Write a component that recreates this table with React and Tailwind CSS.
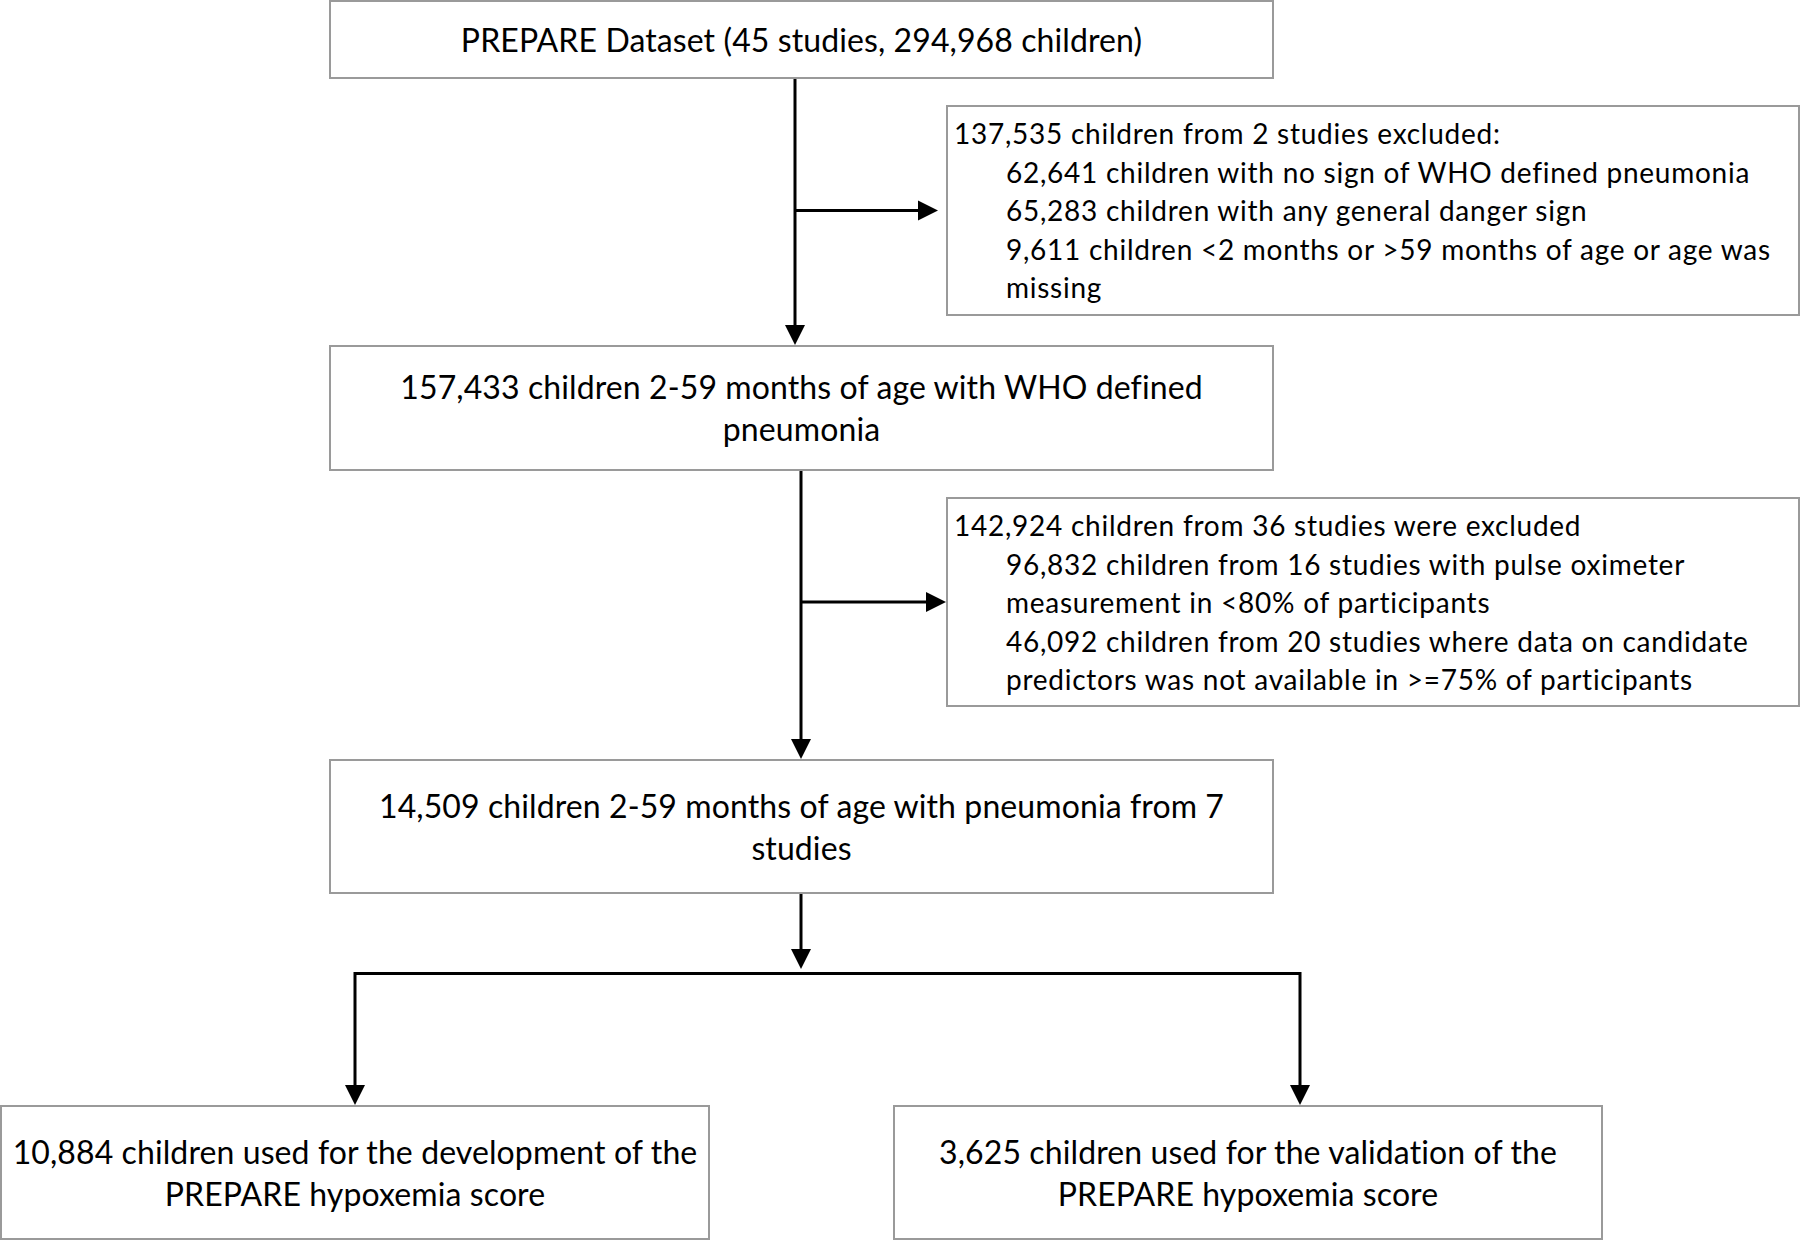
const boxBorder = 'border-2 border-[#9a9a9a] bg-white';

function CenterBox({ className, lines }) {
  return (
    <div className={`${boxBorder} flex flex-col items-center justify-center text-center text-[32px] leading-[42px] tracking-[0.1px] ${className}`}>
      {lines.map((l, i) => (
        <span key={i} className="whitespace-nowrap">{l}</span>
      ))}
    </div>
  );
}

function SideBox({ className, head, items }) {
  return (
    <div className={`${boxBorder} pt-[7px] pl-[6px] text-[28px] leading-[38.6px] tracking-[0.75px] ${className}`}>
      <div className="whitespace-nowrap">{head}</div>
      {items.map((l, i) => (
        <div key={i} className="ml-[52px] whitespace-nowrap">{l}</div>
      ))}
    </div>
  );
}

export default function App() {
  return (
    <div className="w-[1800px] h-[1240px] overflow-hidden bg-white text-black font-['Lato',sans-serif]">
      {/* top box */}
      <CenterBox className="ml-[329px] w-[945px] h-[79px]"
        lines={['PREPARE Dataset (45 studies, 294,968 children)']} />

      {/* first exclusion */}
      <div className="flex">
        <svg width="946" height="266" className="shrink-0">
          <line x1="795" y1="0" x2="795" y2="250" stroke="black" strokeWidth="3" />
          <polygon points="785,246 805,246 795,266" fill="black" />
          <line x1="795" y1="131.5" x2="920" y2="131.5" stroke="black" strokeWidth="3" />
          <polygon points="918,121.5 918,141.5 938,131.5" fill="black" />
        </svg>
        <SideBox className="mt-[26px] h-[211px] w-[854px]"
          head="137,535 children from 2 studies excluded:"
          items={[
            '62,641 children with no sign of WHO defined pneumonia',
            '65,283 children with any general danger sign',
            '9,611 children <2 months or >59 months of age or age was',
            'missing',
          ]} />
      </div>

      <CenterBox className="ml-[329px] w-[945px] h-[126px]"
        lines={['157,433 children 2-59 months of age with WHO defined', 'pneumonia']} />

      {/* second exclusion */}
      <div className="flex">
        <svg width="946" height="288" className="shrink-0">
          <line x1="801" y1="0" x2="801" y2="272" stroke="black" strokeWidth="3" />
          <polygon points="791,268 811,268 801,288" fill="black" />
          <line x1="801" y1="131" x2="928" y2="131" stroke="black" strokeWidth="3" />
          <polygon points="926,121 926,141 946,131" fill="black" />
        </svg>
        <SideBox className="mt-[26px] h-[210px] w-[854px]"
          head="142,924 children from 36 studies were excluded"
          items={[
            '96,832 children from 16 studies with pulse oximeter',
            'measurement in <80% of participants',
            '46,092 children from 20 studies where data on candidate',
            'predictors was not available in >=75% of participants',
          ]} />
      </div>

      <CenterBox className="ml-[329px] w-[945px] h-[135px]"
        lines={['14,509 children 2-59 months of age with pneumonia from 7', 'studies']} />

      {/* split */}
      <svg width="1800" height="211" className="block">
        <line x1="801" y1="0" x2="801" y2="58" stroke="black" strokeWidth="3" />
        <polygon points="791,55 811,55 801,75" fill="black" />
        <polyline points="355,195 355,79.5 1300,79.5 1300,195" fill="none" stroke="black" strokeWidth="3" />
        <polygon points="345,191 365,191 355,211" fill="black" />
        <polygon points="1290,191 1310,191 1300,211" fill="black" />
      </svg>

      <div className="flex">
        <CenterBox className="w-[710px] h-[135px]"
          lines={['10,884 children used for the development of the', 'PREPARE hypoxemia score']} />
        <CenterBox className="ml-[183px] w-[710px] h-[135px]"
          lines={['3,625 children used for the validation of the', 'PREPARE hypoxemia score']} />
      </div>
    </div>
  );
}
